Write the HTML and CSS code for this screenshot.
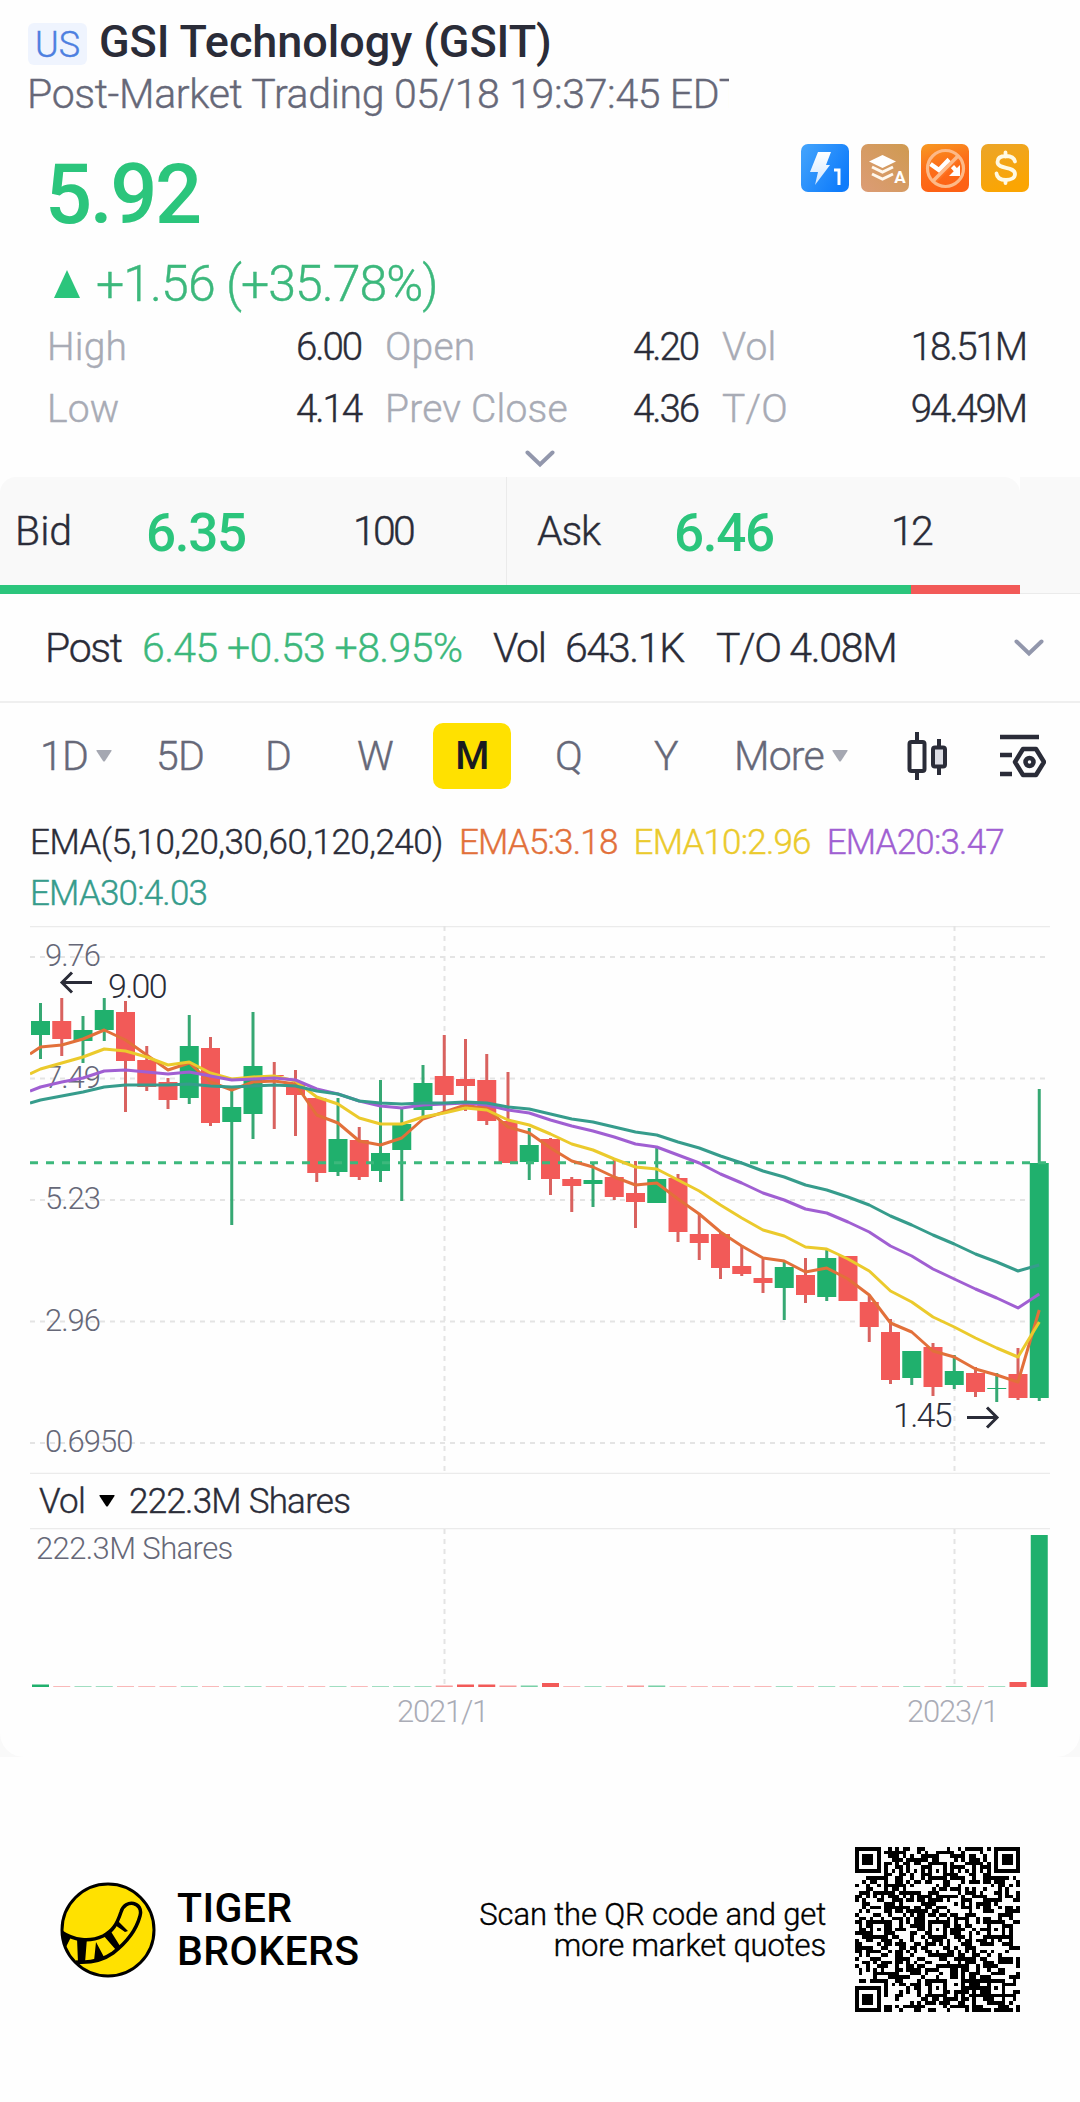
FILE: index.html
```html
<!DOCTYPE html>
<html lang="en">
<head>
<meta charset="UTF-8">
<meta name="viewport" content="width=device-width, initial-scale=1.0">
<title>GSI Technology (GSIT)</title>
<link rel="stylesheet" href="styles.css">
</head>
<body>
    <div class="card">
        <div class="header">
            <div class="title-row">
                <span class="market">US</span>
                <h1>GSI Technology (GSIT)</h1>
            </div>
            <div class="status">Post-Market Trading 05/18 19:37:45 EDT</div>
        </div>

        <div class="quote">
            <div class="price-row">
                <div class="price">5.92</div>
                <div class="badges">
                    <svg width="48" height="48" viewBox="0 0 48 48">
                        <defs>
                            <linearGradient id="blue" x1="0" y1="0" x2="1" y2="0.6"><stop offset="0" stop-color="#45a5fc"/><stop offset="1" stop-color="#0f7cfb"/></linearGradient>
                            <linearGradient id="tan" x1="1" y1="0" x2="0" y2="1"><stop offset="0" stop-color="#cf9a50"/><stop offset="1" stop-color="#dc9c76"/></linearGradient>
                            <linearGradient id="orange" x1="0" y1="0" x2="0.3" y2="1"><stop offset="0" stop-color="#f79a22"/><stop offset="0.5" stop-color="#fc701a"/><stop offset="1" stop-color="#fd6114"/></linearGradient>
                            <linearGradient id="gold" x1="0" y1="0" x2="0.4" y2="1"><stop offset="0" stop-color="#eba52a"/><stop offset="1" stop-color="#fba502"/></linearGradient>
                            <linearGradient id="shine" x1="0" y1="0" x2="0" y2="1"><stop offset="0" stop-color="#fff"/><stop offset="1" stop-color="#cfe6ff"/></linearGradient>
                        </defs>
                        <rect width="48" height="48" rx="7" fill="url(#blue)"/>
                        <path d="M17 8h13l-5 13h4L14 41l3-13H9z" fill="url(#shine)"/>
                        <path d="M33 26h5v15" fill="none" stroke="#fff" stroke-width="3"/>
                    </svg>
                    <svg width="48" height="48" viewBox="0 0 48 48">
                        <rect width="48" height="48" rx="7" fill="url(#tan)"/>
                        <path d="M8 17.500l13.500-6.500L35 17.500 21.500 24z" fill="#fff"/>
                        <path d="M11 23l10.500 5L32 23M11 30l10.500 5L32 30" fill="none" stroke="#fff8ee" stroke-width="3"/>
                        <text x="39" y="39" class="badge-letter">A</text>
                    </svg>
                    <svg width="48" height="48" viewBox="0 0 48 48">
                        <rect width="48" height="48" rx="7" fill="url(#orange)"/>
                        <path d="M9.500 20l8.500 6 8.500-9 9 10" fill="none" stroke="#fff" stroke-width="4.500"/>
                        <path d="M39 21v11H28z" fill="#fff"/>
                        <path d="M13 39L38 14" stroke="#fd7422" stroke-width="3"/>
                        <path d="M12 37L37 12" stroke="#fdb987" stroke-width="3.500"/>
                        <circle cx="24.500" cy="24.500" r="18" fill="none" stroke="#fdb987" stroke-width="3.200"/>
                    </svg>
                    <svg width="48" height="48" viewBox="0 0 48 48">
                        <rect width="48" height="48" rx="7" fill="url(#gold)"/>
                        <path d="M34 17.500c-1-4-4.500-5.500-9-5.500-5 0-8.500 2-8.500 6 0 8 17.500 3.500 17.500 12 0 4-4 6-9 6s-9-2-9.500-6.500M24.500 8.500v4M24.500 36v3" fill="none" stroke="#fff9e3" stroke-width="3.800" stroke-linecap="round"/>
                    </svg>
                </div>
            </div>
            <div class="change">
                <svg width="26" height="28" viewBox="0 0 26 28"><path d="M13 0l13 28H0z" fill="#2bc57c"/></svg>
                <span>+1.56 (+35.78%)</span>
            </div>
            <div class="stats">
                <div class="stat"><span>High</span><b>6.00</b></div>
                <div class="stat"><span>Open</span><b>4.20</b></div>
                <div class="stat"><span>Vol</span><b>18.51M</b></div>
                <div class="stat"><span>Low</span><b>4.14</b></div>
                <div class="stat"><span>Prev Close</span><b>4.36</b></div>
                <div class="stat"><span>T/O</span><b>94.49M</b></div>
            </div>
            <div class="expand">
                <svg width="30" height="18" viewBox="0 0 30 18"><path d="M2.500 2.500L15 14.500 27.500 2.500" class="chevron"/></svg>
            </div>
        </div>

        <div class="depth">
            <div class="bid-ask">
                <div class="side">
                    <span>Bid</span><b>6.35</b><span>100</span>
                </div>
                <div class="side ask">
                    <span>Ask</span><b>6.46</b><span>12</span>
                </div>
            </div>
            <div class="depth-more"></div>
            <div class="ratio"><i></i></div>
        </div>

        <div class="post">
            <span>Post</span>
            <span class="up">6.45 +0.53 +8.95%</span>
            <span>Vol</span>
            <span>643.1K</span>
            <span>T/O 4.08M</span>
            <svg width="30" height="18" viewBox="0 0 30 18"><path d="M2.500 2.500L15 14.500 27.500 2.500" class="chevron"/></svg>
        </div>

        <div class="periods">
            <span>1D<svg width="16" height="12" viewBox="0 0 16 12"><path d="M1 0h14q1 0 .5 1L9 11q-1 1-2 0L.5 1Q0 0 1 0z"/></svg></span>
            <span>5D</span>
            <span>D</span>
            <span>W</span>
            <span class="active">M</span>
            <span>Q</span>
            <span>Y</span>
            <span>More<svg width="16" height="12" viewBox="0 0 16 12"><path d="M1 0h14q1 0 .5 1L9 11q-1 1-2 0L.5 1Q0 0 1 0z"/></svg></span>
            <svg class="tool" width="44" height="50" viewBox="0 0 44 50">
                <path d="M12 1v9M12 41v8M34 8v8M34 36v8"/>
                <rect x="4.500" y="11" width="15" height="29" rx="2"/>
                <rect x="28" y="16.500" width="12" height="19" rx="2" fill="#dcdde4"/>
            </svg>
            <svg class="tool settings" width="48" height="46" viewBox="0 0 48 46">
                <path d="M2 4h39M2 22h12M2 41h12"/>
                <path d="M25 16h13l8 13-8 13H25l-8-13z" stroke-linejoin="round"/>
                <circle cx="31.500" cy="29" r="4"/>
            </svg>
        </div>

        <div class="legend">
            <span>EMA(5,10,20,30,60,120,240)</span>
            <span class="ema5">EMA5:3.18</span>
            <span class="ema10">EMA10:2.96</span>
            <span class="ema20">EMA20:3.47</span>
            <span class="ema30">EMA30:4.03</span>
        </div>

        <svg id="kline" class="chart" width="1020" height="548" viewBox="30 0 1020 548"></svg>
        <div class="vol-title">
            Vol
            <svg width="16" height="12" viewBox="0 0 16 12"><path d="M1 0h14q1 0 .5 1L9 11q-1 1-2 0L.5 1Q0 0 1 0z"/></svg>
            222.3M Shares
        </div>
        <svg id="volume" class="chart" width="1020" height="210" viewBox="30 0 1020 210"></svg>
    </div>

    <div class="footer">
        <svg width="96" height="96" viewBox="0 0 96 96">
            <defs><clipPath id="face"><circle cx="48" cy="48" r="46"/></clipPath></defs>
            <circle cx="48" cy="48" r="46" fill="#ffe100" stroke="#000" stroke-width="3"/>
            <g clip-path="url(#face)">
                <path d="M0 49C14 59 30 60 43 54 53 49 57 42 61 30c4-14 23-10 19 4C76 49 66 61 53 71 42 79 30 81 16 80" fill="none" stroke="#000" stroke-width="3.500"/>
                <path d="M0 50l11 5-5 10zM17 56h10l-2 25h-7zM36 60l8 15-10 4zM43 53l7-5 10 16-4 4zM55 43l3-4 10 10-3 1z" fill="#000"/>
            </g>
        </svg>
        <div class="brand">TIGER<br>BROKERS</div>
        <div class="scan">Scan the QR code and get<br>more market quotes</div>
        <svg id="qr" width="165" height="165" viewBox="0 0 45 45" shape-rendering="crispEdges"></svg>
    </div>

    <script>
        const UP = '#20b06d', DOWN = '#f25a58';
        const STEP = 21.25, FIRST = 40.5;
        const x = i => FIRST + i * STEP;

        // direction, high, body top, body bottom, low
        const candles = [
            [1, 77, 95, 109, 133], [0, 72, 95, 113, 130], [1, 90, 104, 115, 137], [1, 72, 84, 104, 115],
            [0, 75, 86, 135, 186], [0, 120, 134, 161, 165], [0, 152, 156, 174, 183], [1, 89, 120, 172, 178],
            [0, 111, 122, 197, 200], [1, 161, 181, 196, 299], [1, 86, 140, 188, 213], [0, 136, 149, 150, 203],
            [0, 144, 158, 169, 210], [0, 172, 172, 247, 256], [1, 172, 213, 246, 250], [0, 201, 214, 251, 254],
            [1, 154, 227, 245, 256], [1, 181, 198, 224, 275], [1, 139, 157, 184, 191], [0, 109, 150, 169, 186],
            [0, 113, 153, 160, 185], [0, 128, 154, 195, 199], [0, 146, 195, 237, 237], [1, 202, 219, 236, 254],
            [0, 212, 213, 253, 269], [0, 251, 253, 260, 286], [1, 237, 254, 258, 281], [0, 233, 251, 271, 274],
            [0, 235, 267, 276, 302], [1, 221, 253, 277, 277], [0, 248, 252, 306, 316], [0, 287, 308, 317, 334],
            [0, 307, 308, 342, 353], [0, 319, 340, 348, 350], [0, 333, 352, 357, 367], [1, 335, 341, 362, 394],
            [0, 332, 349, 369, 377], [1, 323, 332, 371, 375], [0, 330, 330, 375, 375], [0, 370, 376, 401, 416],
            [0, 393, 406, 454, 458], [1, 425, 425, 452, 459], [0, 417, 421, 461, 470], [1, 429, 445, 459, 463],
            [0, 441, 447, 466, 471], [1, 447, 462, 463, 476], [0, 422, 448, 472, 474], [1, 163, 237, 472, 475]
        ];

        // first value sits on the left edge of the chart
        const lines = {
            '#e2703a': [128, 121, 119, 113, 104, 114, 129, 144, 137, 156, 164, 156, 155, 158, 189, 197, 215, 219, 212, 193, 186, 179, 183, 201, 207, 222, 235, 241, 251, 259, 257, 273, 288, 306, 320, 332, 335, 346, 342, 353, 369, 397, 406, 425, 431, 443, 449, 456, 384],
            '#ebca2c': [148, 143, 137, 131, 123, 125, 131, 139, 136, 147, 153, 151, 150, 155, 171, 178, 192, 198, 198, 191, 187, 182, 184, 194, 199, 208, 218, 224, 233, 241, 243, 254, 265, 279, 292, 304, 310, 321, 323, 333, 345, 365, 376, 391, 401, 412, 422, 431, 396],
            '#a05fd2': [165, 161, 156, 152, 145, 144, 146, 148, 146, 150, 154, 153, 152, 154, 163, 168, 175, 180, 182, 179, 178, 177, 179, 184, 187, 194, 200, 205, 211, 218, 221, 229, 237, 248, 257, 267, 274, 283, 287, 296, 306, 320, 330, 343, 353, 363, 372, 382, 368],
            '#369c8c': [177, 174, 170, 166, 161, 159, 159, 159, 158, 160, 161, 160, 159, 160, 165, 168, 175, 177, 178, 177, 177, 176, 177, 181, 183, 188, 193, 196, 201, 206, 209, 216, 222, 230, 237, 245, 251, 259, 264, 271, 279, 290, 299, 309, 318, 328, 336, 345, 339]
        };

        function drawKline() {
            let s = '<path class="edge" d="M30 .5h1020M30 547.5h1020"/>';
            s += '<path class="grid" d="M444.500 0v547M954.500 0v547"/>';
            const axis = [['9.76', 31], ['7.49', 152.5], ['5.23', 274], ['2.96', 395.5], ['0.6950', 517]];
            for (const [label, y] of axis) {
                s += `<path class="grid" d="M30 ${y}h1020"/><text class="axis" x="45" y="${y + 9}">${label}</text>`;
            }
            candles.forEach(([up, high, top, bottom, low], i) => {
                const c = up ? UP : DOWN;
                s += `<rect x="${x(i) - 1.5}" y="${high}" width="3" height="${low - high}" fill="${up ? '#36a873' : '#d9625f'}"/>`;
                s += `<rect x="${x(i) - 9.5}" y="${top}" width="19" height="${bottom - top}" fill="${c}"/>`;
            });
            s += '<path d="M30 236.800h1016" class="last-price"/>';
            for (const color in lines) {
                const pts = lines[color].map((y, i) => (i ? x(i - 1) : 30) + ',' + y).join(' ');
                s += `<polyline points="${pts}" stroke="${color}" class="ema"/>`;
            }
            s += '<path class="arrow" d="M92 56.500H62M72 46.500l-10 10 10 10"/><text class="mark" x="108" y="72">9.00</text>';
            s += '<path class="arrow" d="M967 491.500h30M987 481.500l10 10-10 10"/><text class="mark" x="893" y="501">1.45</text>';
            document.getElementById('kline').innerHTML = s;
        }

        function drawVolume() {
            const big = { 0: 2.5, 19: 1.5, 20: 2.5, 21: 2.5, 22: 1.5, 23: 1.5, 24: 4, 28: 1.5, 29: 1.5, 46: 5, 47: 152 };
            let s = '<path class="edge" d="M30 .5h1020"/><path class="grid" d="M444.500 1v157M954.500 1v157"/>';
            candles.forEach(([up], i) => {
                const h = big[i] || 0.7;
                s += `<rect x="${x(i) - 8.5}" y="${159 - h}" width="17" height="${h}" fill="${up ? UP : DOWN}" opacity="${h > 2 ? 1 : 0.6}"/>`;
            });
            s += '<text class="axis small" x="36" y="31">222.3M Shares</text>';
            s += '<text class="date" x="397" y="194">2021/1</text><text class="date" x="907" y="194">2023/1</text>';
            document.getElementById('volume').innerHTML = s;
        }

        function drawQr() {
            const n = 45;
            let seed = 7411;
            const m = [...Array(n)].map(() => [...Array(n)].map(() => {
                seed = (seed * 16807) % 2147483647;
                return seed % 100 < 50;
            }));
            const square = (cx, cy, r, quiet) => {
                for (let y = -quiet; y <= quiet; y++) {
                    for (let x = -quiet; x <= quiet; x++) {
                        const d = Math.max(Math.abs(x), Math.abs(y));
                        if (m[cy + y] && cx + x >= 0 && cx + x < n) {
                            m[cy + y][cx + x] = d === r || d <= r - 2;
                        }
                    }
                }
            };
            for (const a of [6, 22, 38]) {
                for (const b of [6, 22, 38]) square(a, b, 2, 2);
            }
            for (let i = 8; i < n - 8; i++) m[6][i] = m[i][6] = i % 2 === 0;
            square(3, 3, 3, 4);
            square(n - 4, 3, 3, 4);
            square(3, n - 4, 3, 4);
            let d = '';
            m.forEach((row, y) => row.forEach((on, x) => { if (on) d += `M${x} ${y}h1v1h-1z`; }));
            document.getElementById('qr').innerHTML = `<path d="${d}"/>`;
        }

        drawKline();
        drawVolume();
        drawQr();
    </script>
</body>
</html>
```

FILE: styles.css
```css
/* Global styles */
* {
    box-sizing: border-box;
}
body {
    margin: 0;
    width: 1080px;
    height: 2102px;
    overflow: hidden;
    background-color: #f9f9f9;
    font-family: Roboto, "Liberation Sans", sans-serif;
    font-weight: 300;
    -webkit-text-stroke: 0.4px;
    color: #2a2c38;
}
svg {
    display: block;
    flex: none;
}
.card {
    height: 1757px;
    background: #fefefe;
    border-radius: 0 0 24px 24px;
}

/* Name and market status */
.header {
    padding: 16px 28px 0;
}
.title-row {
    display: flex;
    gap: 12px;
    height: 52px;
}
.market {
    width: 59px;
    height: 42px;
    margin-top: 7px;
    border-radius: 6px;
    background: #eff4fe;
    color: #4d7fe0;
    font-size: 36px;
    line-height: 45px;
    text-align: center;
}
h1 {
    margin: 0;
    font-size: 45px;
    font-weight: 500;
    line-height: 51px;
    letter-spacing: -0.05px;
    -webkit-text-stroke: 0;
}
.status {
    width: 702px;
    height: 52px;
    overflow: hidden;
    white-space: nowrap;
    color: #666878;
    font-size: 41px;
    line-height: 53px;
    letter-spacing: -0.33px;
    margin-left: -1px;
}

/* Price */
.quote {
    padding: 0 52px 0 46px;
    height: 357px;
}
.price-row {
    display: flex;
    justify-content: space-between;
    height: 124px;
    padding-top: 24px;
    color: #2bc57c;
}
.price {
    font-size: 83px;
    font-weight: 500;
    line-height: 102px;
    letter-spacing: -2.5px;
    margin-left: -1px;
    -webkit-text-stroke: 0;
}
.badges {
    display: flex;
    gap: 12px;
    margin-right: -1px;
}
.badge-letter {
    font-size: 17px;
    font-weight: 700;
    text-anchor: middle;
    fill: #fff;
    -webkit-text-stroke: 0;
}
.change {
    display: flex;
    align-items: center;
    gap: 16px;
    height: 80px;
    padding-left: 8px;
    color: #3cb87c;
    font-size: 50px;
    letter-spacing: -0.95px;
}
.stats {
    display: grid;
    grid-template-columns: 314px 313px 304px;
    column-gap: 24px;
    grid-auto-rows: 62px;
    margin-top: -8px;
    padding-left: 1px;
    font-size: 39px;
    line-height: 62px;
}
.stat {
    display: flex;
    justify-content: space-between;
    color: #a8abb5;
    letter-spacing: 0.2px;
}
.stat b {
    font-size: 38.5px;
    font-weight: 300;
    color: #2a2c38;
    letter-spacing: -2.1px;
}
.expand {
    display: flex;
    justify-content: center;
    margin: 10px -6px 0 0;
}
.chevron {
    fill: none;
    stroke: #9297ac;
    stroke-width: 4;
    stroke-linecap: round;
}

/* Bid / ask */
.depth {
    display: grid;
    grid-template-columns: 1020px 60px;
    grid-template-rows: 108px 9px;
}
.bid-ask {
    display: flex;
    background: #f9f9f9;
    border-radius: 16px 16px 0 0;
}
.side {
    display: grid;
    grid-template-columns: 131px 207px 1fr;
    align-items: center;
    width: 507px;
    padding-left: 15px;
    border-right: 1px solid #ebebeb;
    font-size: 41px;
}
.side.ask {
    grid-template-columns: 137px 217px 1fr;
    width: 513px;
    padding-left: 30px;
    border-right: 0;
}
.side.ask span:first-child {
    letter-spacing: -1.2px;
}
.side span:last-child {
    letter-spacing: -2.8px;
}
.side b {
    padding-top: 3px;
    font-size: 53px;
    font-weight: 500;
    color: #2bc57c;
    letter-spacing: -1.3px;
    -webkit-text-stroke: 0;
}
.depth-more {
    grid-row: span 2;
    grid-column: 2;
    background: #f9f9f9;
    border-bottom: 1px solid #ebebeb;
}
.ratio {
    grid-row: 2;
    grid-column: 1;
    display: flex;
    background: #f25a58;
}
.ratio i {
    width: 911px;
    background: #2bc57c;
}

/* Post-market line */
.post {
    display: grid;
    grid-template-columns: 97px 351px 72px 151px 298px 30px;
    align-items: center;
    height: 109px;
    padding-left: 45px;
    border-bottom: 2px solid #efefef;
    font-size: 41px;
    letter-spacing: -1.3px;
    white-space: nowrap;
}
.post .up {
    color: #3cb87c;
    letter-spacing: -0.6px;
}

/* Period tabs */
.periods {
    display: grid;
    grid-template-columns: 116px 109px 92px 76px 122px 99px 80px 171px 93px 48px;
    align-items: center;
    height: 106px;
    padding-left: 40px;
    font-size: 41px;
    color: #666878;
}
.periods span {
    display: flex;
    align-items: center;
    gap: 8px;
    letter-spacing: -0.8px;
}
.periods span svg {
    fill: #a5a8b2;
}
.periods .active {
    justify-content: center;
    width: 78px;
    height: 66px;
    border-radius: 10px;
    background: #ffe100;
    color: #191a20;
    font-weight: 500;
    font-size: 39px;
    -webkit-text-stroke: 0;
}
.tool {
    fill: none;
    stroke: #2a2c38;
    stroke-width: 4;
}
.settings {
    stroke-width: 4.5px;
}

/* Indicator legend */
.legend {
    display: flex;
    flex-wrap: wrap;
    gap: 0 16px;
    height: 117px;
    padding: 8px 29px 0 30px;
    font-size: 35px;
    line-height: 51px;
    align-content: flex-start;
    letter-spacing: -0.8px;
}
.legend span:first-child {
    letter-spacing: -0.52px;
}
.ema5 { color: #e2703a; }
.ema10 { color: #ebca2c; }
.ema20 { color: #a05fd2; }
.ema30 { color: #369c8c; }

/* Charts */
.chart {
    margin-left: 30px;
}
.edge {
    stroke: #ebebeb;
    stroke-width: 1.5;
}
.grid {
    stroke: #e4e4e4;
    stroke-width: 2;
    stroke-dasharray: 5;
}
.axis, .date {
    font-size: 31px;
    letter-spacing: -1px;
    fill: #666878;
}
.small {
    letter-spacing: -0.6px;
}
.date {
    fill: #aaacb6;
    letter-spacing: -1.2px;
}
.mark {
    font-size: 34px;
    letter-spacing: -1.7px;
    fill: #2a2c38;
}
.arrow {
    fill: none;
    stroke: #2a2c38;
    stroke-width: 3;
}
.ema {
    fill: none;
    stroke-width: 3;
    stroke-linejoin: round;
}
.last-price {
    stroke: #3cb87c;
    stroke-width: 3;
    stroke-dasharray: 8;
}
.vol-title {
    display: flex;
    align-items: center;
    gap: 14px;
    height: 54px;
    padding-left: 39px;
    font-size: 35px;
    letter-spacing: -0.75px;
}

/* Footer */
.footer {
    display: flex;
    align-items: center;
    height: 345px;
    padding: 0 60px;
    background: #fefefe;
}
.brand {
    margin-left: 21px;
    color: #000;
    font-size: 41px;
    font-weight: 500;
    line-height: 43px;
    letter-spacing: 0.4px;
    -webkit-text-stroke: 0;
}
.scan {
    margin: 0 29px 0 auto;
    color: #000;
    font-size: 31px;
    line-height: 31px;
    text-align: right;
    letter-spacing: -0.15px;
}
```
